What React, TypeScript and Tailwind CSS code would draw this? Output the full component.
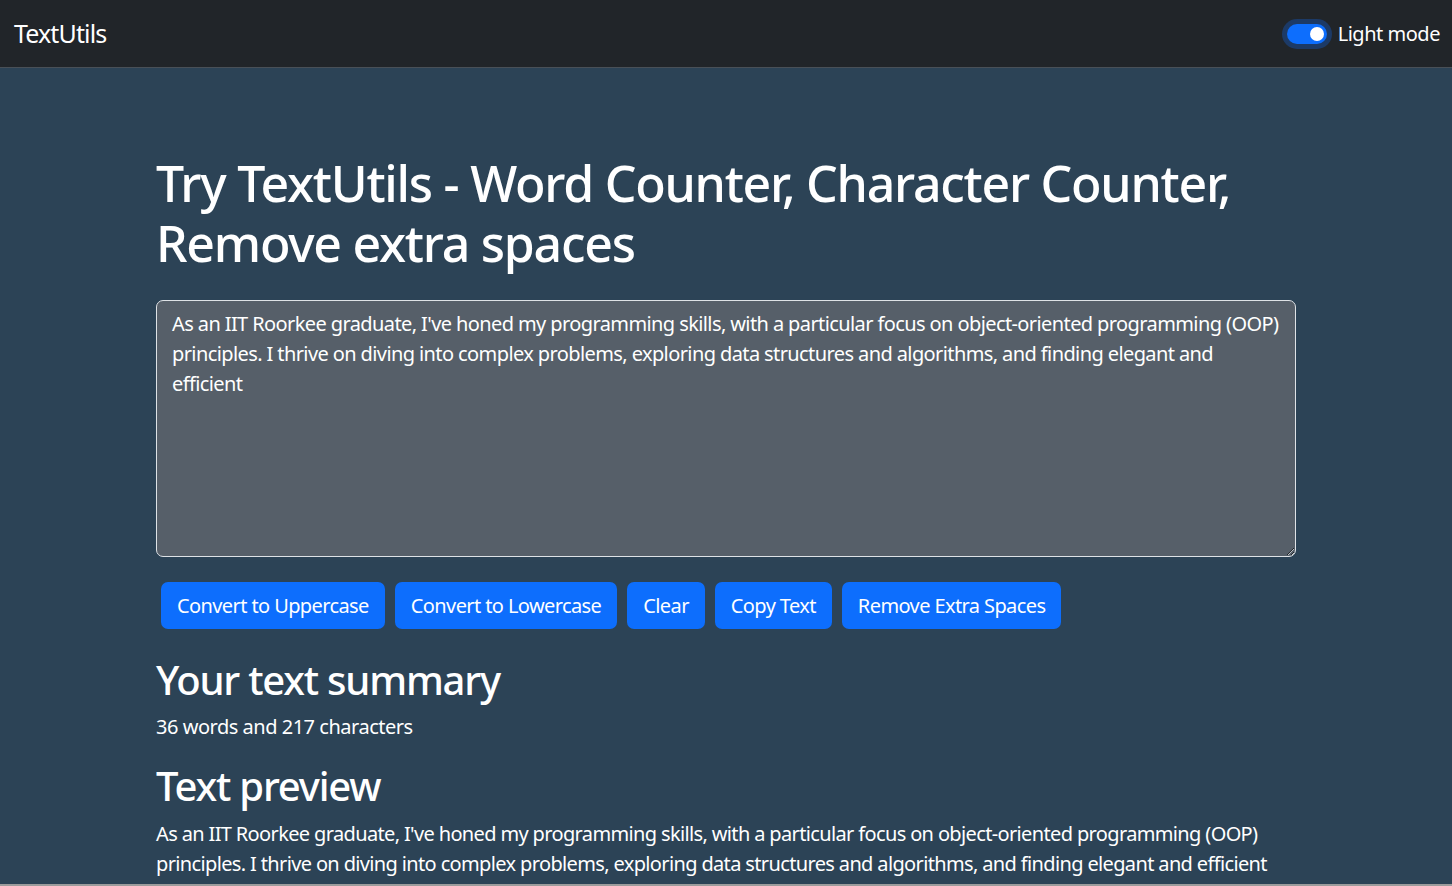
import { useState } from "react"

const initialText =
  "As an IIT Roorkee graduate, I've honed my programming skills, with a particular focus on object-oriented programming (OOP) principles. I thrive on diving into complex problems, exploring data structures and algorithms, and finding elegant and efficient"

export default function App() {
  const [text, setText] = useState(initialText)
  const [dark, setDark] = useState(true)

  const words = text.split(/\s+/).filter((w) => w.length !== 0).length
  const chars = text.replace(/\s/g, "").length

  const buttons = ["Convert to Uppercase", "Convert to Lowercase", "Clear", "Copy Text", "Remove Extra Spaces"]

  return (
    <div className="min-h-[886px] bg-[#2c4356] text-white font-['Noto_Sans',sans-serif] tracking-[-0.03em]">
      {/* Navbar */}
      <nav className="h-[68px] flex items-center justify-between pl-[14px] pr-[12px] bg-[#212529] border-b border-[#495057]">
        <a href="#" className="text-[25px] leading-none text-white tracking-[-0.035em]">
          TextUtils
        </a>
        <label className="flex items-center gap-[11px] cursor-pointer">
          <button
            onClick={() => setDark(!dark)}
            className="relative w-[40px] h-[20px] rounded-full bg-[#0d6efd] ring-[5px] ring-[#1c3a66]"
          >
            <span className="absolute right-[3px] top-[3px] w-[14px] h-[14px] rounded-full bg-white"></span>
          </button>
          <span className="text-[20px]">Light mode</span>
        </label>
      </nav>

      {/* Main */}
      <div className="w-[1140px] mx-auto pt-[85px]">
        <h1 className="text-[50px] leading-[60px] font-medium mb-[27px] tracking-[-0.025em]">
          Try TextUtils - Word Counter, Character Counter, Remove extra spaces
        </h1>
        <textarea
          value={text}
          onChange={(e) => setText(e.target.value)}
          rows={8}
          className="block w-full h-[257px] bg-[#565f69] text-white text-[20px] leading-[30px] px-[15px] py-[7.5px] border border-[#dee2e6] rounded-[7px] outline-none tracking-[-0.03em]"
        />
        <div className="flex gap-[10px] px-[5px] mt-[25px]">
          {buttons.map((b) => (
            <button
              key={b}
              className="h-[47px] px-[16px] bg-[#0d6efd] text-white text-[20px] rounded-[7px] tracking-[-0.03em]"
            >
              {b}
            </button>
          ))}
        </div>

        <h2 className="text-[40px] leading-[48px] font-medium mt-[27px] mb-[8px] tracking-[-0.03em]">Your text summary</h2>
        <p className="text-[20px] leading-[30px] mb-[20px]">
          {words} words and {chars} characters
        </p>
        <h2 className="text-[40px] leading-[48px] font-medium mb-[9px] tracking-[-0.03em]">Text preview</h2>
        <p className="text-[20px] leading-[30px] tracking-[-0.032em]">{text}</p>
      </div>

      <div className="fixed bottom-0 left-0 right-0 h-[2px] bg-[#9c9c9c]"></div>
    </div>
  )
}
